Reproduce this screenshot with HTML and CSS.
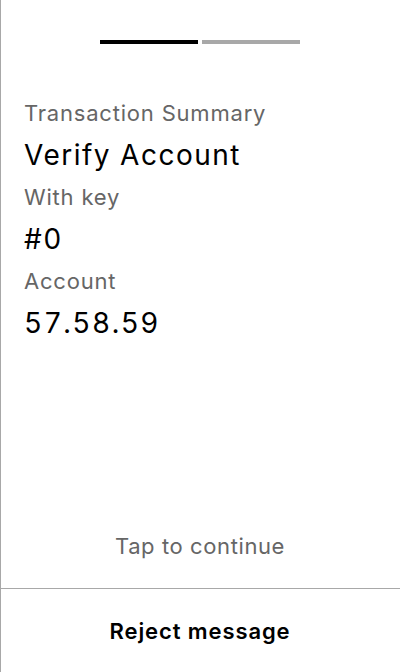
FILE: index.html
```html
<!DOCTYPE html>
<html>
<head>
<meta charset="utf-8">
<link rel="stylesheet" href="styles.css">
</head>
<body>
<div class="screen">
  <div class="progress">
    <div class="bar active"></div>
    <div class="bar"></div>
  </div>
  <div class="content">
    <div class="label">Transaction Summary</div>
    <div class="value">Verify Account</div>
    <div class="label">With key</div>
    <div class="value">#0</div>
    <div class="label">Account</div>
    <div class="value">57.58.59</div>
  </div>
  <div class="tap">Tap to continue</div>
  <div class="reject">Reject message</div>
</div>
</body>
</html>
```
FILE: styles.css
```css
html, body {
  margin: 0;
  padding: 0;
  background: #fff;
}
body {
  font-family: "Inter", "Liberation Sans", sans-serif;
}
.screen {
  width: 400px;
  height: 672px;
  box-sizing: border-box;
  box-shadow: inset 1px 0 0 #a8a8a8;
  display: flex;
  flex-direction: column;
}
.progress {
  display: flex;
  justify-content: center;
  gap: 4px;
  padding-top: 40px;
}
.bar {
  width: 98px;
  height: 4px;
  background: #a8a8a8;
}
.bar.active {
  background: #000;
}
.content {
  padding: 48px 24px 0;
  display: flex;
  flex-direction: column;
}
.label {
  font-size: 22px;
  line-height: 42px;
  letter-spacing: 0.8px;
  color: #666;
}
.value {
  font-size: 28px;
  line-height: 42px;
  letter-spacing: 1.5px;
  font-variant-numeric: tabular-nums;
  color: #000;
}
.tap {
  margin-top: auto;
  text-align: center;
  font-size: 22px;
  line-height: 28px;
  letter-spacing: 0.6px;
  color: #666;
  padding-bottom: 28px;
}
.reject {
  border-top: 1px solid #a8a8a8;
  height: 83px;
  display: flex;
  align-items: center;
  justify-content: center;
  font-size: 22px;
  font-weight: 600;
  letter-spacing: 0.9px;
  color: #000;
}
```
